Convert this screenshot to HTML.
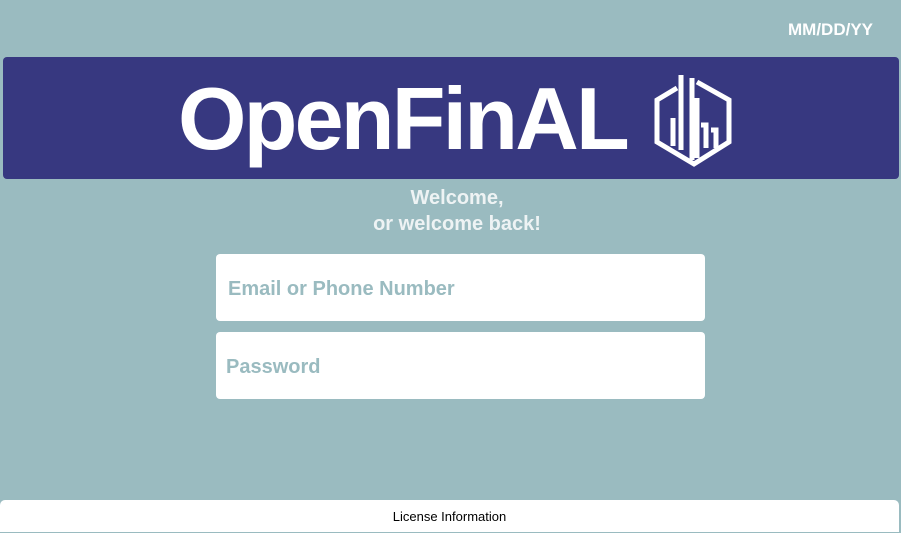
<!DOCTYPE html>
<html><head><meta charset="utf-8"><style>
body{margin:0;width:901px;height:532px;background:#9abbc0;font-family:"Liberation Sans",sans-serif;position:relative;overflow:hidden}
.date{position:absolute;right:28px;top:20px;color:#fff;font-weight:bold;font-size:17px}
.banner{position:absolute;left:3px;top:57px;width:896px;height:122px;background:#373880;border-radius:4px}
.logo{position:absolute;left:178px;top:64px;color:#fff;font-weight:bold;font-size:88px;letter-spacing:-2.8px;line-height:110px}
.wel{position:absolute;left:0;width:914px;top:185px;text-align:center;color:#eef3f4;font-weight:bold;font-size:20px;line-height:26px}
.in{position:absolute;left:216px;width:489px;height:67px;background:#fff;border-radius:4px;color:#9abbc0;font-weight:bold;font-size:20px;box-sizing:border-box;line-height:70px}
.foot{position:absolute;left:0;top:500px;width:899px;height:32px;background:#fff;border-radius:5px 5px 0 0;text-align:center;font-size:13px;line-height:33px;color:#000}
</style></head><body>
<div class="date">MM/DD/YY</div>
<div class="banner"></div>
<div class="logo">OpenFinAL</div>
<svg style="position:absolute;left:0;top:0" width="901" height="200">
<g fill="none" stroke="#fff" stroke-width="5" stroke-linejoin="miter">
<polyline points="677,88 657,100 657,142 694,164 729,142 729,100 697,82"/>
<line x1="681" y1="75" x2="681" y2="150"/>
<line x1="692" y1="78" x2="692" y2="160"/>
<line x1="697" y1="98" x2="697" y2="158"/>
<line x1="673" y1="118" x2="673" y2="146"/>
<polyline points="701,125 706,125 706,148"/>
<polyline points="711,130 716,130 716,148"/>
</g></svg>
<div class="wel">Welcome,<br>or welcome back!</div>
<div class="in" style="top:254px;padding-left:12px">Email or Phone Number</div>
<div class="in" style="top:332px;padding-left:10px">Password</div>
<div class="foot">License Information</div>
</body></html>
